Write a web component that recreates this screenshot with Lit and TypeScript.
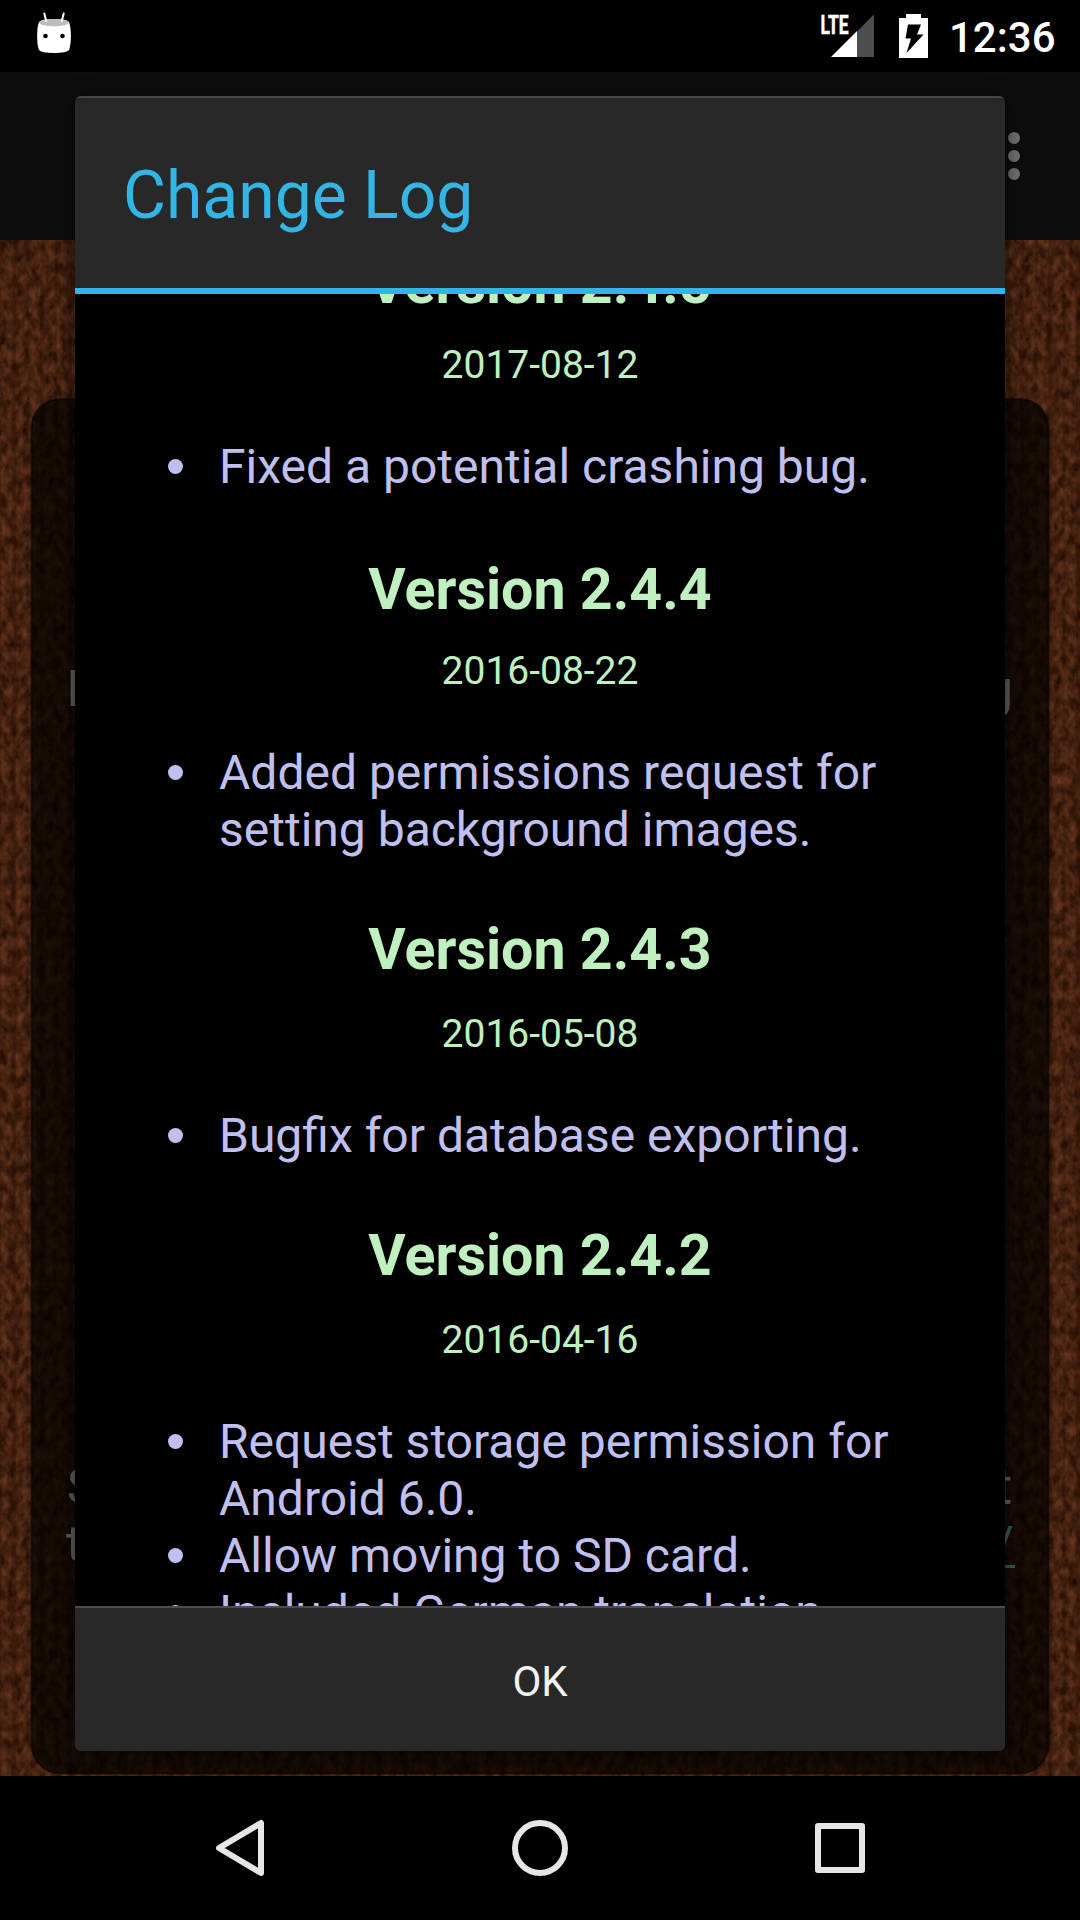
import { LitElement, html, css, svg } from "lit";
import { customElement } from "lit/decorators.js";

interface Release {
  version: string;
  date: string;
  changes: string[];
  raised?: boolean;
}

const RELEASES: Release[] = [
  { version: "2.4.5", date: "2017-08-12", changes: ["Fixed a potential crashing bug."] },
  { version: "2.4.4", date: "2016-08-22", changes: ["Added permissions request for setting background images."] },
  { version: "2.4.3", date: "2016-05-08", raised: true, changes: ["Bugfix for database exporting."] },
  {
    version: "2.4.2",
    date: "2016-04-16",
    raised: true,
    changes: ["Request storage permission for Android 6.0.", "Allow moving to SD card.", "Included German translation."],
  },
];

@customElement("status-bar")
class StatusBar extends LitElement {
  static styles = css`
    :host { display: flex; height: 72px; background: #000; color: #fff; padding: 0 25px 0 30px; box-sizing: border-box; }
    .spacer { flex: 1; }
    .icon { display: block; flex: none; }
    .lte { font: 700 26px Roboto, sans-serif; }
    .clock { font: 500 42px/49px Roboto, sans-serif; padding-top: 13px; margin-left: 19px; width: 106px; text-align: right; white-space: nowrap; }
  `;
  render() {
    return html`
      <svg class="icon" width="48" height="72" viewBox="30 0 48 72">
        <path d="M39 22C36.500 28 36.500 44 39 50Q41 53 54 53Q67 53 69 50C71.500 44 71.500 28 69 22Q67 19 54 19Q41 19 39 22Z" fill="#fff" />
        <ellipse cx="54" cy="22.700" rx="14.500" ry="3.700" fill="#bdbdbd" />
        <path d="M44.300 13.500l1.900 7.500M63.700 13.500l-1.900 7.500" stroke="#fff" stroke-width="2" stroke-linecap="round" />
        <circle cx="45.500" cy="36" r="2.300" /><circle cx="62.500" cy="36" r="2.300" />
      </svg>
      <div class="spacer"></div>
      <svg class="icon" width="110" height="72" viewBox="820 0 110 72">
        <path d="M874 14.500V57H856.500V32Z" fill="#4d4d4d" />
        <path d="M831 57L857 31V57Z" fill="#fff" />
        <text class="lte" x="820.500" y="33.500" fill="#fff" stroke="#fff" stroke-width="0.6" textLength="28" lengthAdjust="spacingAndGlyphs">LTE</text>
        <path d="M906 14h15v4h7v40h-29v-40h7Z" fill="#fff" />
        <path d="M908 24.500h13l-4 10h6.500L906.500 53l4.500-14.500h-5.500Z" fill="#000" />
      </svg>
      <div class="clock">12:36</div>
    `;
  }
}

@customElement("nav-bar")
class NavBar extends LitElement {
  static styles = css`
    :host { display: flex; height: 144px; background: #000; justify-content: center; gap: 204px; align-items: center; }
    .icon { width: 96px; height: 96px; fill: none; stroke: #e6e6e6; stroke-width: 6; stroke-linejoin: round; }
  `;
  render() {
    return html`
      <svg class="icon" viewBox="0 0 96 96"><path d="M69 23V73L27 48Z" /></svg>
      <svg class="icon" viewBox="0 0 96 96"><circle cx="48" cy="48" r="25" /></svg>
      <svg class="icon" viewBox="0 0 96 96"><path d="M26 26H70V70H26Z" /></svg>
    `;
  }
}

@customElement("knit-backdrop")
class KnitBackdrop extends LitElement {
  static styles = css`
    :host { display: block; width: 1080px; height: 1536px; }
    .cloth { display: block; }
    .faded { font: 50px Roboto, sans-serif; fill: #606060; }
    .link { font: 50px Roboto, sans-serif; fill: #365c58; }
  `;
  render() {
    return html`<svg class="cloth" width="1080" height="1536" viewBox="0 240 1080 1536">
      <defs>
        <filter id="fibres" x="0" y="0" width="100%" height="100%" color-interpolation-filters="sRGB">
          <feTurbulence type="fractalNoise" baseFrequency="0.13 0.08" numOctaves="4" seed="8" />
          <feColorMatrix values="0.36 0 0 0 0.080  0.21 0 0 0 0.020  0.15 0 0 0 -0.015  0 0 0 0 1" />
        </filter>
        <pattern id="knit" width="28" height="18" patternUnits="userSpaceOnUse">
          <path d="M1 3l9 10M18 13l9-10" stroke="#a05a30" stroke-opacity="0.12" stroke-width="4" />
          <path d="M14 0v18" stroke="#160500" stroke-opacity="0.16" stroke-width="4" />
          <path d="M0 0v18M28 0v18" stroke="#160500" stroke-opacity="0.1" stroke-width="3" />
        </pattern>
      </defs>
      <rect y="240" width="1080" height="1536" filter="url(#fibres)" />
      <rect y="240" width="1080" height="1536" fill="url(#knit)" />
      <rect x="31.500" y="399" width="1017" height="1374.500" rx="29" fill="#000" fill-opacity="0.68" stroke="#090401" stroke-opacity="0.6" stroke-width="2" />
      ${svg`
        <text class="faded" x="66.500" y="706">H</text>
        <text class="faded" x="1013" y="706" text-anchor="end">g</text>
        <text class="faded" x="67" y="1504">S</text>
        <text class="faded" x="66" y="1561">t</text>
        <text class="faded" x="1012" y="1504" text-anchor="end">t</text>
        <text class="link" x="1014" y="1562" text-anchor="end">/</text>
        <path d="M980 1566.500H1015" stroke="#365c58" stroke-width="3" />
      `}
    </svg>`;
  }
}

@customElement("change-log-dialog")
class ChangeLogDialog extends LitElement {
  static styles = css`
    :host {
      display: flex; flex-direction: column; width: 930px; height: 1655px; border-radius: 6px; overflow: hidden;
      background: #282828; font-family: Roboto, sans-serif; box-shadow: 0 3px 18px 2px rgba(0, 0, 0, 0.5);
    }
    .title {
      margin: 0; height: 192px; box-sizing: border-box; padding: 59px 48px 0; font-weight: 400; font-size: 66px;
      line-height: 77px; color: #33b5e5; border-top: 2px solid #464646;
    }
    .rule { height: 6px; background: #33b5e5; flex: none; }
    .log { height: 1312px; background: #000; overflow: hidden; box-sizing: border-box; padding: 0 24px; flex: none; }
    .entries { margin-top: -44px; }
    .version { margin: 0; height: 68px; font-size: 57.3px; line-height: 68px; font-weight: 700; text-align: center; color: #c0f0c0; }
    .raised { margin: -3px 0 3px; }
    .date { height: 47px; margin-top: 24px; font-size: 39px; line-height: 47px; text-align: center; color: #c0f0c0; }
    .changes { margin: 49px 0 0; padding: 0 0 61px 120px; list-style: none; font-size: 48px; line-height: 57px; color: #c0c0f0; }
    .raised + .date { margin-top: 27px; }
    .change { display: flex; }
    .dot { flex: none; width: 15px; height: 15px; border-radius: 50%; background: #c0c0f0; margin: 21px 36px 0 -51px; }
    .ok {
      flex: 1; border: 0; border-top: 2px solid #4c4c4c; background: #282828; color: #f3f3f3; font: 400 42px/49px Roboto, sans-serif;
      padding: 4px 0 0; display: flex; align-items: center; justify-content: center; width: 100%;
    }
  `;
  render() {
    return html`
      <h1 class="title">Change Log</h1>
      <div class="rule"></div>
      <div class="log"><div class="entries">
        ${RELEASES.map(
          (r) => html`
            <h2 class="version ${r.raised ? "raised" : ""}">Version ${r.version}</h2>
            <div class="date">${r.date}</div>
            <ul class="changes">
              ${r.changes.map((c) => html`<li class="change"><span class="dot"></span><span>${c}</span></li>`)}
            </ul>
          `
        )}
      </div></div>
      <button class="ok">OK</button>
    `;
  }
}

@customElement("app-root")
class AppRoot extends LitElement {
  static styles = css`
    :host { display: flex; flex-direction: column; width: 1080px; height: 1920px; overflow: hidden; position: relative; background: #000; }
    .actions { height: 168px; background: #0d0d0d; display: flex; justify-content: flex-end; align-items: center; padding-right: 60px; box-sizing: border-box; flex: none; }
    .more { display: grid; gap: 6px; }
    .more-dot { width: 12px; height: 12px; border-radius: 50%; background: #707070; }
    .dialog { position: absolute; left: 75px; top: 96px; }
    .nav { position: relative; }
  `;
  render() {
    return html`
      <status-bar></status-bar>
      <div class="actions">
        <div class="more"><span class="more-dot"></span><span class="more-dot"></span><span class="more-dot"></span></div>
      </div>
      <knit-backdrop></knit-backdrop>
      <nav-bar class="nav"></nav-bar>
      <change-log-dialog class="dialog"></change-log-dialog>
    `;
  }
}
